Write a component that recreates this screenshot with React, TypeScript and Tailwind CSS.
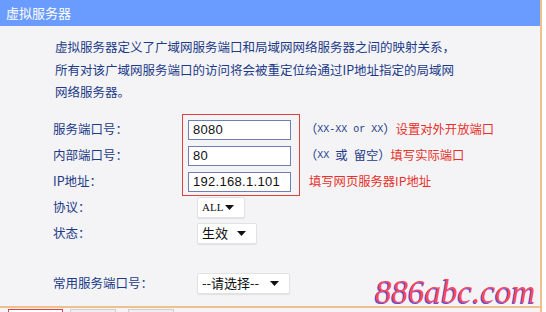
import React from "react";

const cjk = "font-['SimSun','Noto_Sans_CJK_SC',sans-serif]";

const Select: React.FC<{ label: string; width: string; mono?: boolean }> = ({ label, width, mono }) => (
  <div
    className={`flex h-[21px] items-center justify-between rounded-[2px] border border-[#e2e2e2] bg-white pl-[4px] pr-[10px] text-[13px] text-[#111] shadow-[0_1px_1px_rgba(0,0,0,0.08)] ${width}`}
  >
    <span className={mono ? "font-['Liberation_Serif',serif] text-[11px]" : ""}>{label}</span>
    <svg width="9" height="5" viewBox="0 0 9 5" className="shrink-0">
      <path d="M0 0h9L4.5 5z" fill="#111" />
    </svg>
  </div>
);

const Input: React.FC<{ value: string }> = ({ value }) => (
  <div className="flex h-[20px] w-[103px] items-center border border-[#6f7fb3] bg-white pl-[4px] font-['Liberation_Sans',sans-serif] text-[13px] tracking-[0.3px] text-[#111]">
    {value}
  </div>
);

export default function App() {
  return (
    <div className={`relative flex h-[312px] w-[546px] overflow-hidden bg-white ${cjk}`}>
      <div className="flex w-[542px] flex-col border-r-2 border-[#efbf8c]">
        <div className="flex h-[26px] items-center bg-[#6a9bff] pl-[6px] text-[13px] text-white">
          虚拟服务器
        </div>
        <div className="flex flex-1 flex-col bg-[#f4f4f6] text-[12px] text-[#1c3a88]">
          <div className="pl-[55px] pt-[10px] text-[12.5px] leading-[22.5px]">
            <p>虚拟服务器定义了广域网服务端口和局域网网络服务器之间的映射关系，</p>
            <p>所有对该广域网服务端口的访问将会被重定位给通过IP地址指定的局域网</p>
            <p>网络服务器。</p>
          </div>

          <div className="mt-[10px] flex pl-[53px]">
            <div className="flex w-[129px] flex-col gap-[6px] pt-[6px] text-[12.5px]">
              <div className="flex h-[20px] items-center">服务端口号：</div>
              <div className="flex h-[20px] items-center">内部端口号：</div>
              <div className="flex h-[20px] items-center">IP地址：</div>
            </div>
            <div className="flex h-[82px] w-[118px] flex-col gap-[6px] border border-[#e0403a] pl-[5px] pt-[5px]">
              <Input value="8080" />
              <Input value="80" />
              <Input value="192.168.1.101" />
            </div>
            <div className="flex flex-col gap-[6px] pt-[6px] pl-[5px] text-[12.3px]">
              <div className="flex h-[20px] items-center">
                <span>（</span>
                <span className="font-['Liberation_Mono',monospace] text-[10px]">XX-XX or XX</span>
                <span>）</span>
                <span className="text-[#e8302a]">设置对外开放端口</span>
              </div>
              <div className="flex h-[20px] items-center">
                <span>（</span>
                <span className="font-['Liberation_Mono',monospace] text-[10px]">XX</span>
                <span className="ml-[6px]">或</span>
                <span className="ml-[6px]">留空</span>
                <span>）</span>
                <span className="text-[#e8302a]">填写实际端口</span>
              </div>
              <div className="flex h-[20px] items-center pl-[4px] text-[#e8302a]">
                填写网页服务器IP地址
              </div>
            </div>
          </div>

          <div className="mt-[1px] flex h-[21px] items-center pl-[53px] text-[12.5px]">
            <div className="w-[144px]">协议：</div>
            <Select label="ALL" width="w-[48px]" mono />
          </div>
          <div className="mt-[5px] flex h-[21px] items-center pl-[53px] text-[12.5px]">
            <div className="w-[144px]">状态：</div>
            <Select label="生效" width="w-[60px]" />
          </div>
          <div className="mt-[29px] flex h-[21px] items-center pl-[53px] text-[12.5px]">
            <div className="w-[144px]">常用服务端口号：</div>
            <Select label="--请选择--" width="w-[93px]" />
          </div>
          <div className="flex-1" />
        </div>
        <div className="h-[2px] bg-[#efbf8c]" />
        <div className="flex h-[4px] gap-[7px] bg-[#f4f4f6] pl-[8px] pt-[1px]">
          <div className="h-[4px] w-[55px] border border-b-0 border-[#e0403a] bg-white" />
          <div className="h-[4px] w-[46px] border border-b-0 border-[#cfcfcf] bg-[#efefef]" />
          <div className="ml-[5px] h-[4px] w-[46px] border border-b-0 border-[#cfcfcf] bg-[#efefef]" />
        </div>
      </div>

      <div className="absolute left-[375px] top-[276px] font-['Liberation_Serif',serif] text-[33px] italic leading-none text-[#ff4a5a] [text-shadow:-1px_1px_0_#4a55ff]">
        886abc.com
      </div>
    </div>
  );
}
